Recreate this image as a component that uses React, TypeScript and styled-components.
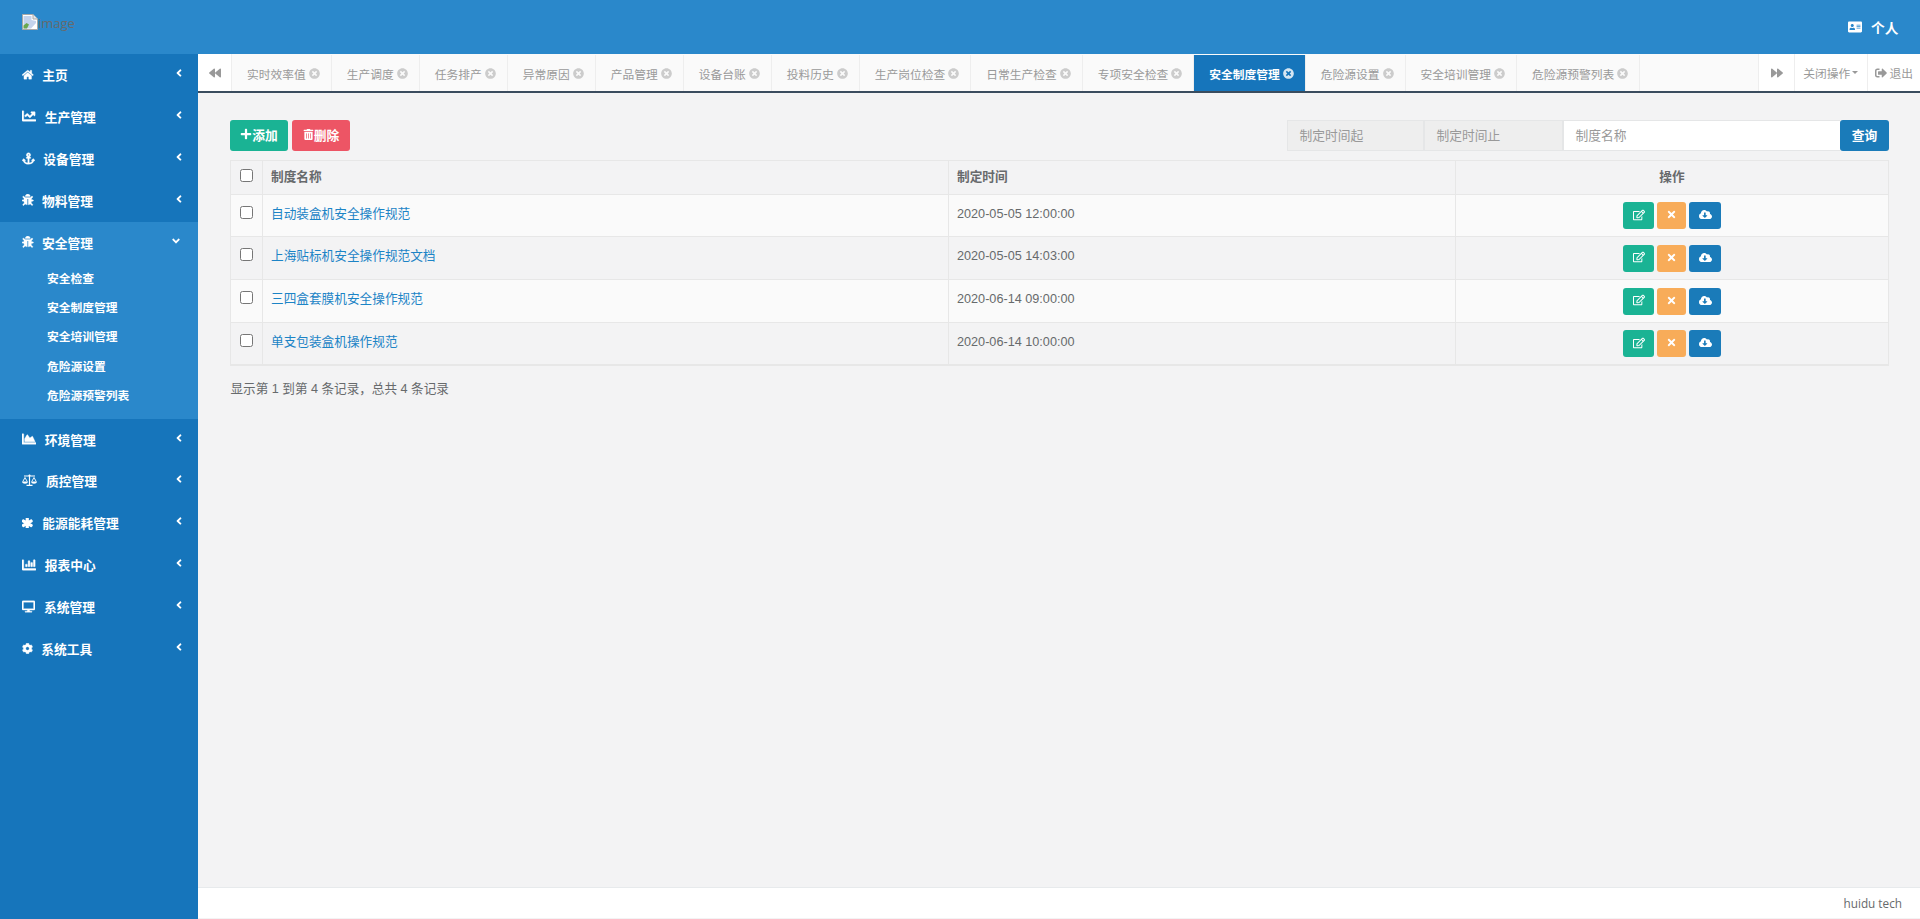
import React from "react";
import styled, { createGlobalStyle } from "styled-components";
import {
  FaHome, FaChartLine, FaAnchor, FaBug, FaChartArea, FaAsterisk, FaChartBar,
  FaDesktop, FaCog, FaAngleLeft, FaAngleDown, FaAddressCard, FaBackward, FaForward, FaTimesCircle,
  FaSignOutAlt, FaPlus, FaTrashAlt, FaRegEdit, FaTimes, FaCloudDownloadAlt,
} from "react-icons/fa";

const SANS = `"Liberation Sans", "Noto Sans CJK SC", sans-serif`;

const Global = createGlobalStyle`
  html, body { margin: 0; padding: 0; height: 100%; overflow: hidden; background: #f3f3f4; }
  * { box-sizing: border-box; }
  body { font-family: ${SANS}; font-size: 12.74px; color: #676a6c; }
`;

const Shell = styled.div`
  display: grid;
  grid-template-columns: 198px 1fr;
  grid-template-rows: 54px 1fr;
  height: 919px;
  width: 1920px;
`;

const TopBar = styled.header`
  grid-column: 1 / 3;
  background: #2a88cb;
  display: flex;
  justify-content: space-between;
  align-items: center;
  padding: 0 21.5px 0 22px;
`;

const Logo = styled.div`
  display: flex;
  align-items: flex-start;
  height: 100%;
  padding-top: 14px;
  font-family: "Open Sans", sans-serif;
  font-size: 13px;
  line-height: 18px;
  color: #676a6c;
  svg { display: block; flex: none; }
`;

const Profile = styled.div`
  display: flex;
  align-items: center;
  gap: 9px;
  color: #fff;
  font-weight: 700;
  font-size: 13.7px;
`;

const Side = styled.nav`
  background: #1675bb;
  display: flex;
  flex-direction: column;
`;

const MenuRow = styled.div`
  height: 41.9px;
  display: flex;
  align-items: center;
  padding: 0 0 1px 22px;
  color: #fff;
  font-weight: 700;
  font-size: 12.74px;
  position: relative;
`;

const MenuIcon = styled.span<{ $w: number; $heavy?: boolean }>`
  width: ${(p) => p.$w}px;
  flex: none;
  display: flex;
  align-items: center;
  svg { stroke: currentColor; stroke-width: ${(p) => (p.$heavy ? 70 : 14)}; }
`;

const Chevron = styled.span<{ $x: number }>`
  position: absolute;
  left: ${(p) => p.$x}px;
  top: 13px;
  display: flex;
  font-size: 12px;
`;

const OpenGroup = styled.div`
  background: #2a88cb;
  height: 197px;
`;

const SubItem = styled.div`
  height: 29.35px;
  display: flex;
  align-items: center;
  padding-left: 47px;
  color: #fff;
  font-weight: 700;
  font-size: 11.76px;
  position: relative;
  top: -1px;
`;

const Main = styled.main`
  display: flex;
  flex-direction: column;
  min-width: 0;
`;

const TabBar = styled.div`
  height: 39px;
  display: flex;
  background: #fafafa;
  border-bottom: 2px solid #3a4c5e;
  font-size: 11.76px;
  color: #999;
`;

const ArrowButton = styled.div<{ $w: number; $right?: boolean }>`
  width: ${(p) => p.$w}px;
  flex: none;
  display: flex;
  align-items: center;
  justify-content: center;
  gap: 1px;
  background: #fff;
  border-left: ${(p) => (p.$right ? "1px solid #eee" : "none")};
  color: #999;
`;

const TabList = styled.div`
  flex: 1;
  display: flex;
  min-width: 0;
  border-left: 1px solid #eee;
`;

const Tab = styled.div<{ $active?: boolean }>`
  display: flex;
  align-items: center;
  gap: 3px;
  padding: 0 11px 0 15px;
  margin-top: 1px;
  border-right: 1px solid #eee;
  flex: none;
  background: ${(p) => (p.$active ? "#1675bb" : "transparent")};
  color: ${(p) => (p.$active ? "#fff" : "#999")};
  font-weight: ${(p) => (p.$active ? 700 : 400)};
  svg { color: ${(p) => (p.$active ? "#d6e6f2" : "#ccc")}; flex: none; }
`;

const Content = styled.section`
  flex: 1;
  padding: 27px 31px 0 32px;
  background: #f3f3f4;
`;

const Toolbar = styled.div`
  display: flex;
  justify-content: space-between;
  height: 31px;
  margin-bottom: 9px;
`;

const ButtonGroup = styled.div`
  display: flex;
  gap: 4px;
`;

const ActionButton = styled.div<{ $bg: string }>`
  width: 58px;
  display: flex;
  align-items: center;
  justify-content: center;
  padding-bottom: 3px;
  background: ${(p) => p.$bg};
  color: #fff;
  border-radius: 3px;
  font-weight: 700;
  font-size: 12.74px;
`;

const SearchGroup = styled.div`
  display: flex;
  height: 31px;
`;

const SearchField = styled.div<{ $w: number; $white?: boolean }>`
  width: ${(p) => p.$w}px;
  display: flex;
  align-items: center;
  padding: 0 0 3px 11.5px;
  background: ${(p) => (p.$white ? "#fff" : "#eee")};
  border: 1px solid #e5e6e7;
  border-right-width: ${(p) => (p.$white ? 0 : 1)}px;
  color: #999;
  font-size: 12.74px;
`;

const SearchButton = styled.div`
  width: 49px;
  display: flex;
  align-items: center;
  justify-content: center;
  padding-bottom: 3px;
  background: #1a7bb9;
  color: #fff;
  font-weight: 700;
  border-radius: 3px;
`;

const Table = styled.table`
  width: 1658px;
  table-layout: fixed;
  border-collapse: collapse;
  border: 1px solid #e7e7e7;
  border-bottom-width: 2px;
  font-size: 12.66px;
  color: #676a6c;
`;

const HeadCell = styled.th<{ $center?: boolean }>`
  height: 33.7px;
  padding: 0 8px;
  text-align: ${(p) => (p.$center ? "center" : "left")};
  font-weight: 700;
  border: 1px solid #e7e7e7;
  vertical-align: middle;
  line-height: 18px;
`;

const Row = styled.tr<{ $odd: boolean }>`
  background: ${(p) => (p.$odd ? "#fafafa" : "#f3f3f4")};
`;

const Cell = styled.td`
  height: 42.8px;
  padding: 10px 8px 0;
  border: 1px solid #e7e7e7;
  vertical-align: top;
  line-height: 18px;
`;

const CheckCell = styled.td`
  height: 42.8px;
  padding: 11px 0 0 9px;
  border: 1px solid #e7e7e7;
  vertical-align: top;
`;

const HeadCheckCell = styled.th`
  padding: 0 0 3px 9px;
  border: 1px solid #e7e7e7;
  text-align: left;
  vertical-align: middle;
`;

const Check = styled.input.attrs({ type: "checkbox" })`
  display: block;
  margin: 0;
  width: 13px;
  height: 13px;
`;

const DocLink = styled.span`
  color: #1c84c6;
`;

const OpsCell = styled.td`
  height: 42.8px;
  padding: 0;
  border: 1px solid #e7e7e7;
  vertical-align: middle;
`;

const Ops = styled.div`
  display: flex;
  justify-content: center;
  gap: 3px;
`;

const OpButton = styled.div<{ $bg: string; $w: number }>`
  width: ${(p) => p.$w}px;
  height: 27px;
  display: flex;
  align-items: center;
  justify-content: center;
  padding-bottom: 2px;
  background: ${(p) => p.$bg};
  border-radius: 3px;
  color: #fff;
`;

const Summary = styled.div`
  margin-top: 14px;
  padding-left: 0.5px;
  line-height: 18px;
  font-size: 12.6px;
`;

const Footer = styled.footer`
  height: 31px;
  margin-bottom: 1px;
  border-top: 1px solid #e7eaec;
  background: #fff;
  display: flex;
  align-items: center;
  justify-content: flex-end;
  padding: 0 18px 0 0;
  font-family: "Open Sans", sans-serif;
  font-size: 11.76px;
  color: #676a6c;
`;

const Caret = styled.span`
  display: inline-block;
  margin-left: 1px;
  width: 0;
  height: 0;
  border-left: 3px solid transparent;
  border-right: 3px solid transparent;
  border-top: 3px solid #999;
  vertical-align: middle;
`;

const BrokenImage = () => (
  <svg width="16" height="16" viewBox="0 0 16 16">
    <path d="M.5.5h10.5l4.5 4.5v10.5H.5z" fill="#fff" stroke="#a8a8a8" />
    <path d="M11 .5V5h4.5" fill="#e8e8e8" stroke="#a8a8a8" />
    <path d="M1.5 2h8v4l4.5 1v2L9 14.5H1.5z" fill="#c4d3ec" />
    <path d="M1.5 14.5v-3l3-2.5 2.5 1.5-2 4z" fill="#6aa84f" />
    <path d="M10 15l5-5v5z" fill="#fff" />
  </svg>
);

const ScaleIcon = ({ size }: { size?: number }) => (
  <svg width="15" height={size} viewBox="0 0 15 13" fill="currentColor" style={{ stroke: "none" }}>
    <path d="M2 1.6h4.3L7 .6h1l.7 1H13v1H8.1v8.2h2.4v1.2H4.5v-1.2h2.4V2.6H2z" />
    <path d="M3 2.8L.3 7.6h.9L3 4.4l1.8 3.2h.9z" />
    <path d="M0 7.6h6C5.8 9 4.6 9.8 3 9.8S.2 9 0 7.6z" />
    <path d="M12 2.8L9.3 7.6h.9L12 4.4l1.8 3.2h.9z" />
    <path d="M9 7.6h6c-.2 1.4-1.4 2.2-3 2.2s-2.8-.8-3-2.2z" />
  </svg>
);

type MenuEntry = { t: string; I: React.ComponentType<{ size?: number }>; w: number; s: number; heavy?: boolean };

const closedTop: MenuEntry[] = [
  { t: "主页", I: FaHome, w: 20.3, s: 11.5 },
  { t: "生产管理", I: FaChartLine, w: 22.7, s: 14 },
  { t: "设备管理", I: FaAnchor, w: 21.3, s: 13 },
  { t: "物料管理", I: FaBug, w: 20, s: 11.5 },
];
const closedBottom: MenuEntry[] = [
  { t: "环境管理", I: FaChartArea, w: 22.7, s: 14 },
  { t: "质控管理", I: ScaleIcon, w: 24, s: 13 },
  { t: "能源能耗管理", I: FaAsterisk, w: 20.3, s: 10.5, heavy: true },
  { t: "报表中心", I: FaChartBar, w: 22.7, s: 14 },
  { t: "系统管理", I: FaDesktop, w: 22, s: 13 },
  { t: "系统工具", I: FaCog, w: 19.3, s: 11 },
];
const subs = ["安全检查", "安全制度管理", "安全培训管理", "危险源设置", "危险源预警列表"];
const tabs = ["实时效率值", "生产调度", "任务排产", "异常原因", "产品管理", "设备台账", "投料历史", "生产岗位检查", "日常生产检查", "专项安全检查", "安全制度管理", "危险源设置", "安全培训管理", "危险源预警列表"];
const rows = [
  ["自动装盒机安全操作规范", "2020-05-05 12:00:00"],
  ["上海贴标机安全操作规范文档", "2020-05-05 14:03:00"],
  ["三四盒套膜机安全操作规范", "2020-06-14 09:00:00"],
  ["单支包装盒机操作规范", "2020-06-14 10:00:00"],
];

const Item = ({ m }: { m: MenuEntry }) => (
  <MenuRow>
    <MenuIcon $w={m.w} $heavy={m.heavy}><m.I size={m.s} /></MenuIcon>
    {m.t}
    <Chevron $x={173}><FaAngleLeft /></Chevron>
  </MenuRow>
);

export default function App() {
  return (
    <Shell>
      <Global />
      <TopBar>
        <Logo><BrokenImage />image</Logo>
        <Profile><FaAddressCard size={14} />个人</Profile>
      </TopBar>
      <Side>
        {closedTop.map((m) => <Item key={m.t} m={m} />)}
        <OpenGroup>
          <MenuRow>
            <MenuIcon $w={20}><FaBug size={11.5} /></MenuIcon>
            安全管理
            <Chevron $x={170}><FaAngleDown /></Chevron>
          </MenuRow>
          {subs.map((s) => <SubItem key={s}>{s}</SubItem>)}
        </OpenGroup>
        {closedBottom.map((m) => <Item key={m.t} m={m} />)}
      </Side>
      <Main>
        <TabBar>
          <ArrowButton $w={33}><FaBackward size={12} /></ArrowButton>
          <TabList>
            {tabs.map((t) => (
              <Tab key={t} $active={t === "安全制度管理"}>{t}<FaTimesCircle size={11} /></Tab>
            ))}
          </TabList>
          <ArrowButton $w={36} $right><FaForward size={12} /></ArrowButton>
          <ArrowButton $w={72.5} $right>关闭操作<Caret /></ArrowButton>
          <ArrowButton $w={53.5} $right><FaSignOutAlt size={12} style={{ marginRight: 2 }} />退出</ArrowButton>
        </TabBar>
        <Content>
          <Toolbar>
            <ButtonGroup>
              <ActionButton $bg="#1ab394"><FaPlus size={12} />添加</ActionButton>
              <ActionButton $bg="#ed5565"><FaTrashAlt size={11} />删除</ActionButton>
            </ButtonGroup>
            <SearchGroup>
              <SearchField $w={137}>制定时间起</SearchField>
              <SearchField $w={139}>制定时间止</SearchField>
              <SearchField $w={277} $white>制度名称</SearchField>
              <SearchButton>查询</SearchButton>
            </SearchGroup>
          </Toolbar>
          <Table>
            <colgroup>
              <col width={32} /><col width={686} /><col width={507} /><col width={433} />
            </colgroup>
            <thead>
              <tr>
                <HeadCheckCell><Check /></HeadCheckCell>
                <HeadCell>制度名称</HeadCell>
                <HeadCell>制定时间</HeadCell>
                <HeadCell $center>操作</HeadCell>
              </tr>
            </thead>
            <tbody>
              {rows.map(([name, time], i) => (
                <Row key={name} $odd={i % 2 === 0}>
                  <CheckCell><Check /></CheckCell>
                  <Cell><DocLink>{name}</DocLink></Cell>
                  <Cell>{time}</Cell>
                  <OpsCell>
                    <Ops>
                      <OpButton $bg="#1ab394" $w={31}><FaRegEdit size={12} /></OpButton>
                      <OpButton $bg="#f8ac59" $w={29}><FaTimes size={11} /></OpButton>
                      <OpButton $bg="#1a7bb9" $w={32}><FaCloudDownloadAlt size={13} /></OpButton>
                    </Ops>
                  </OpsCell>
                </Row>
              ))}
            </tbody>
          </Table>
          <Summary>显示第 1 到第 4 条记录，总共 4 条记录</Summary>
        </Content>
        <Footer>huidu tech</Footer>
      </Main>
    </Shell>
  );
}
